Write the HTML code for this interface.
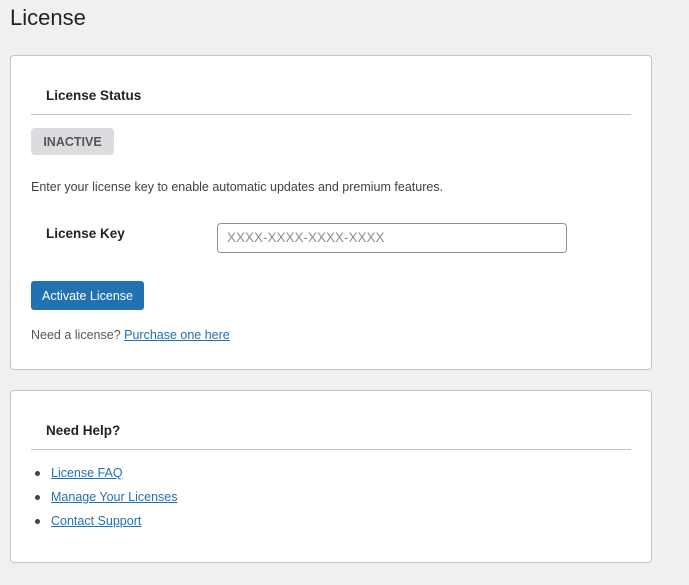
<!DOCTYPE html>
<html><head><style>
body{margin:0;background:#f0f0f1;font-family:"Liberation Sans",sans-serif;color:#3c434a;font-size:13px;width:689px;height:585px;overflow:hidden;position:relative}
.a{position:absolute;white-space:nowrap}
.card{position:absolute;left:10px;width:640px;background:#fff;border:1px solid #c3c4c7;border-radius:4px}
.hr{position:absolute;left:20px;width:600px;height:1px;background:#c3c4c7}
a{color:#2271b1;text-decoration:underline}
b{color:#1d2327}
.li{position:relative;padding-left:26px}
.li:before{content:"";position:absolute;left:10px;top:10px;width:5px;height:5px;border-radius:50%;background:#3c434a}
</style></head><body>
<div class="a" style="left:10px;top:5px;font-size:22px;color:#1d2327">License</div>
<div class="card" style="top:55px;height:313px">
  <div class="a" style="left:35px;top:32px;font-size:13.5px"><b>License Status</b></div>
  <div class="hr" style="top:58px"></div>
  <div class="a" style="left:20px;top:72px;width:83px;height:27px;background:#dcdcde;border-radius:4px;font-weight:bold;font-size:12.5px;line-height:28px;text-align:center;color:#50575e">INACTIVE</div>
  <div class="a" style="left:20px;top:124px;font-size:12.5px">Enter your license key to enable automatic updates and premium features.</div>
  <div class="a" style="left:35px;top:170px;font-size:13.5px"><b>License Key</b></div>
  <div class="a" style="left:206px;top:167px;border:1px solid #8c8f94;border-radius:4px;font-size:13.5px;line-height:28px;color:#8c8f94;padding-left:9px;box-sizing:border-box;width:350px;height:30px">XXXX-XXXX-XXXX-XXXX</div>
  <div class="a" style="left:20px;top:225px;width:113px;height:29px;background:#2271b1;border-radius:3px;color:#fff;font-size:12.5px;line-height:31px;text-align:center">Activate License</div>
  <div class="a" style="left:20px;top:272px;font-size:12.5px;color:#50575e">Need a license? <a>Purchase one here</a></div>
</div>
<div class="card" style="top:390px;height:171px">
  <div class="a" style="left:35px;top:32px;font-size:13.5px"><b>Need Help?</b></div>
  <div class="hr" style="top:58px"></div>
  <div class="a" style="left:14px;top:70px;font-size:12.5px;line-height:24px">
    <div class="li"><a>License FAQ</a></div>
    <div class="li"><a>Manage Your Licenses</a></div>
    <div class="li"><a>Contact Support</a></div>
  </div>
</div>
</body></html>
